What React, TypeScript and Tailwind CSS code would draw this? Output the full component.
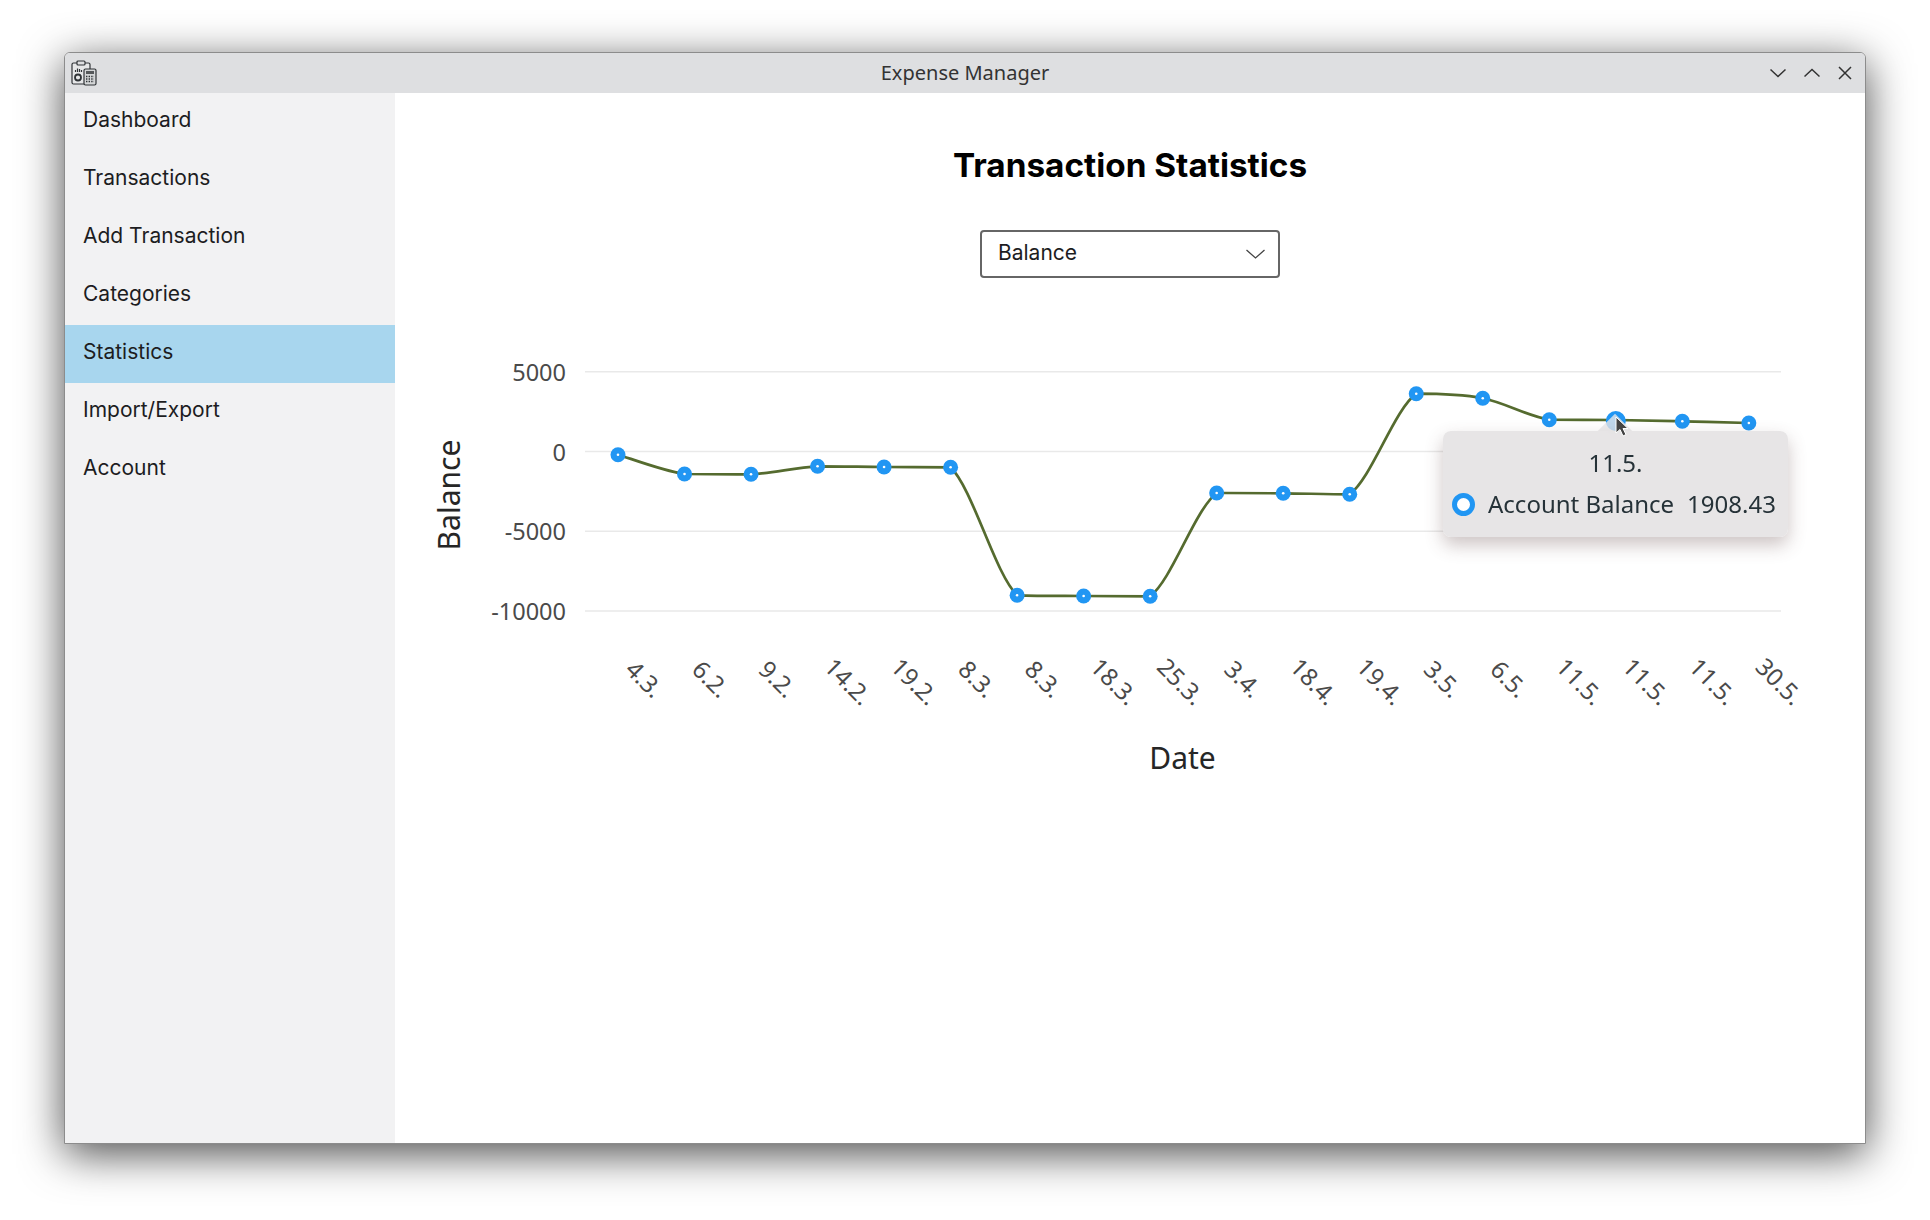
const navItems = ['Dashboard', 'Transactions', 'Add Transaction', 'Categories', 'Statistics', 'Import/Export', 'Account'];

const ys = [454.7, 474, 474.3, 466.3, 467, 467.3, 595.3, 596, 596.3, 493, 493.3, 494.3, 393.7, 398.3, 419.7, 420, 421.3, 423];
const labels = ['4.3.', '6.2.', '9.2.', '14.2.', '19.2.', '8.3.', '8.3.', '18.3.', '25.3.', '3.4.', '18.4.', '19.4.', '3.5.', '6.5.', '11.5.', '11.5.', '11.5.', '30.5.'];
const points = ys.map((y, i) => ({ x: 618 + 66.52 * i, y }));
const gridLines = [
  { y: 371.7, label: '5000' },
  { y: 451.6, label: '0' },
  { y: 531.3, label: '-5000' },
  { y: 611, label: '-10000' },
];

const clamp = (v: number, a: number, b: number) => Math.min(Math.max(v, Math.min(a, b)), Math.max(a, b));

// catmull-rom, control points kept inside each segment's y range so the plateaus stay flat
function linePath() {
  let d = `M${points[0].x} ${points[0].y}`;
  for (let i = 0; i < points.length - 1; i++) {
    const p0 = points[Math.max(i - 1, 0)];
    const p1 = points[i];
    const p2 = points[i + 1];
    const p3 = points[Math.min(i + 2, points.length - 1)];
    const c1x = p1.x + (p2.x - p0.x) / 6;
    const c1y = clamp(p1.y + (p2.y - p0.y) / 6, p1.y, p2.y);
    const c2x = p2.x - (p3.x - p1.x) / 6;
    const c2y = clamp(p2.y - (p3.y - p1.y) / 6, p1.y, p2.y);
    d += ` C${c1x} ${c1y} ${c2x} ${c2y} ${p2.x} ${p2.y}`;
  }
  return d;
}

function AppIcon() {
  return (
    <svg width="26" height="26" viewBox="0 0 26 26" fill="none" stroke="#2f3336" strokeWidth="1.200">
      <rect x="1" y="3" width="18" height="21" rx="1.500" fill="#e6e7e8" />
      <rect x="6" y="1" width="8" height="4" rx="1" fill="#dedfe1" />
      <path d="M4.500 12v-2M6.500 12V8.500M8.500 12v-3M10.500 12v-2" />
      <circle cx="7" cy="17.500" r="3" strokeWidth="1.800" />
      <rect x="13" y="9" width="12" height="16" rx="1.500" fill="#d4d6d7" />
      <rect x="15" y="11" width="8" height="3" fill="#55585a" stroke="none" />
      <path d="M15 16.500h8M15 19h8M15 21.500h8" strokeWidth="1.500" strokeDasharray="1.400 1.200" />
    </svg>
  );
}

function WindowControls() {
  return (
    <div className="flex items-center justify-end gap-[18px] pr-[13px]">
      <svg width="16" height="10" viewBox="0 0 16 10" fill="none" stroke="#333" strokeWidth="1.500">
        <path d="M0.500 1.500 8 8.500 15.500 1.500" />
      </svg>
      <svg width="16" height="10" viewBox="0 0 16 10" fill="none" stroke="#333" strokeWidth="1.500">
        <path d="M0.500 8.500 8 1.500 15.500 8.500" />
      </svg>
      <svg width="14" height="14" viewBox="0 0 14 14" fill="none" stroke="#333" strokeWidth="1.500">
        <path d="M1 1 13 13M13 1 1 13" />
      </svg>
    </div>
  );
}

function Chart() {
  return (
    <svg width="1470" height="500" viewBox="395 300 1470 500" className="block font-['Noto_Sans',sans-serif]">
      {gridLines.map((g) => (
        <g key={g.label}>
          <line x1="585" x2="1781" y1={g.y} y2={g.y} stroke="#e9e9e9" strokeWidth="1.500" />
          <text x="566" y={g.y + 9} textAnchor="end" fontSize="23.500" fill="#4a4a4a">
            {g.label}
          </text>
        </g>
      ))}
      <text transform="translate(460 495) rotate(-90)" textAnchor="middle" fontSize="30" fill="#262626">
        Balance
      </text>
      <text x="1182.500" y="769" textAnchor="middle" fontSize="30" fill="#262626">
        Date
      </text>
      <path d={linePath()} fill="none" stroke="#556b2f" strokeWidth="2.700" />
      {points.map((p, i) => (
        <g key={i}>
          <circle cx={p.x} cy={p.y} r="7.500" fill="#2196f3" />
          <circle cx={p.x} cy={p.y} r="1.300" fill="#ffffff" />
        </g>
      ))}
      <circle cx={points[15].x} cy="421" r="10" fill="#2196f3" />
      {labels.map((label, i) => {
        const long = label.length > 4;
        const cx = points[i].x + (long ? 30 : 26);
        const cy = long ? 682 : 679.5;
        return (
          <text
            key={i}
            transform={`rotate(45 ${cx} ${cy})`}
            x={cx}
            y={cy + 8}
            textAnchor="middle"
            fontSize="24"
            fill="#4a4a4a"
          >
            {label}
          </text>
        );
      })}
    </svg>
  );
}

function Tooltip() {
  return (
    <div className="absolute left-[1048px] top-[131px] w-[345px] h-[106px]">
      <div className="absolute left-[157px] top-[-11px] w-[30px] h-[30px] rotate-45 bg-[#e9e7e8]/80" />
      <div className="relative h-full rounded-[8px] bg-[#e6e4e5]/95 backdrop-blur-sm shadow-[0_8px_18px_rgba(90,60,60,0.3)] font-['Noto_Sans',sans-serif] text-[#263238] flex flex-col items-center">
        <div className="mt-[16px] h-[34px] leading-[32px] text-[24px]">11.5.</div>
        <div className="mt-[6px] flex items-center w-full h-[34px] text-[24px] leading-[34px]">
          <span className="ml-[9px] w-[23px] h-[23px] rounded-full border-[5px] border-[#2196f3] bg-white" />
          <span className="ml-[13px]">Account Balance</span>
          <span className="ml-[13px]">1908.43</span>
        </div>
      </div>
      <svg className="absolute left-[172px] top-[-15px]" width="14" height="21" viewBox="0 0 14 21">
        <path d="M1 1v16l4-3.500 3 6.500 3-1.500-3-6h5z" fill="#444" stroke="#fff" strokeWidth="1" />
      </svg>
    </div>
  );
}

export default function App() {
  return (
    <div className="w-[1930px] h-[1220px] bg-white pl-[64px] pt-[52px] overflow-hidden">
      <div className="w-[1802px] h-[1092px] flex flex-col border border-[#8c8c8c] rounded-t-[6px] shadow-[0_10px_44px_rgba(0,0,0,0.7)] bg-white overflow-hidden">
        <div className="h-[40px] shrink-0 grid grid-cols-3 items-center bg-[#dedfe1]">
          <div className="pl-[6px] flex items-center">
            <AppIcon />
          </div>
          <div className="text-center text-[20px] text-[#333333] font-['Noto_Sans',sans-serif]">Expense Manager</div>
          <WindowControls />
        </div>
        <div className="flex flex-1 min-h-0">
          <nav className="w-[330px] shrink-0 bg-[#f2f2f3] font-['Inter',sans-serif] text-[21px] text-[#1d1d1f]">
            {navItems.map((item) => (
              <div
                key={item}
                className={`h-[58px] flex items-center pl-[18px] pb-[4px] ${item === 'Statistics' ? 'bg-[#a8d6ee]' : ''}`}
              >
                {item}
              </div>
            ))}
          </nav>
          <main className="w-[1470px] flex flex-col items-center bg-white">
            <h1 className="mt-[52px] h-[40px] leading-[40px] text-[33.300px] font-bold text-black font-['Inter',sans-serif]">
              Transaction Statistics
            </h1>
            <div className="mt-[45px] w-[300px] h-[48px] flex items-center justify-between pl-[16px] pr-[13px] border-2 border-[#666666] rounded-[4px] font-['Inter',sans-serif] text-[21px] text-[#1d1d1f]">
              <span className="-mt-[2px]">Balance</span>
              <svg width="19" height="10" viewBox="0 0 19 10" fill="none" stroke="#444" strokeWidth="1.300">
                <path d="M0.500 1 9.500 9 18.500 1" />
              </svg>
            </div>
            <div className="relative mt-[22px] w-[1470px] h-[500px]">
              <Chart />
              <Tooltip />
            </div>
          </main>
        </div>
      </div>
    </div>
  );
}
